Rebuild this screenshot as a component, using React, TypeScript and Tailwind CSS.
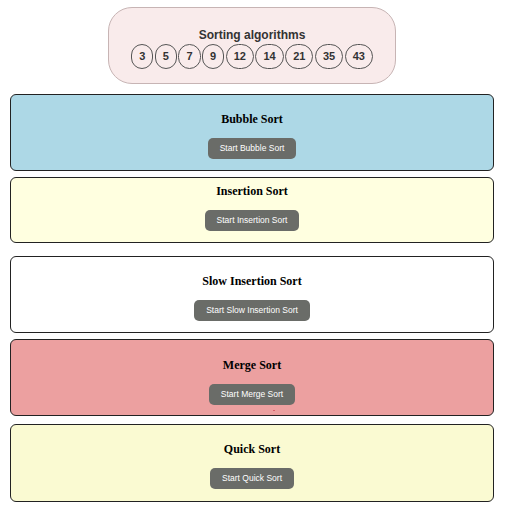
const numbers = [3, 5, 7, 9, 12, 14, 21, 35, 43];

type Algo = {
  name: string;
  bg: string;
  // spacing differs per card in the original page
  wrap: string;
};

const algos: Algo[] = [
  { name: "Bubble Sort", bg: "bg-[#add8e6]", wrap: "mt-[10px] h-[77px] pt-[16px]" },
  { name: "Insertion Sort", bg: "bg-[#ffffe0]", wrap: "mt-[6px] h-[66px] pt-[5px]" },
  { name: "Slow Insertion Sort", bg: "bg-white", wrap: "mt-[13px] h-[77px] pt-[16px]" },
  { name: "Merge Sort", bg: "bg-[#eca0a0]", wrap: "mt-[6px] h-[77px] pt-[17px]" },
  { name: "Quick Sort", bg: "bg-[#fafad2]", wrap: "mt-[8px] h-[78px] pt-[16px]" },
];

function Header() {
  return (
    <div className="mx-auto mt-[7px] flex w-fit flex-col items-center rounded-[24px] border border-[#c7b4b4] bg-[#f9ebeb] px-[22px] pt-[19px] pb-[14px]">
      <h1 className="font-['Liberation_Sans',Arial,sans-serif] text-[12px] leading-[16px] font-bold text-[#333]">
        Sorting algorithms
      </h1>
      <div className="mt-[1px] flex gap-[1.5px]">
        {numbers.map((n) => (
          <span
            key={n}
            className="flex h-[25px] items-center justify-center rounded-full border border-[#555] px-[7px] font-['Liberation_Sans',Arial,sans-serif] text-[11px] font-bold text-[#333]"
          >
            {n}
          </span>
        ))}
      </div>
    </div>
  );
}

function AlgoCard({ algo }: { algo: Algo }) {
  return (
    <section
      className={`relative ml-[10px] box-border flex w-[484px] flex-col items-center rounded-[6px] border border-[#222] ${algo.bg} ${algo.wrap}`}
    >
      <h2 className="font-['Liberation_Serif','Times_New_Roman',serif] text-[12px] leading-[16px] font-bold text-black">
        {algo.name}
      </h2>
      <button className="mt-[11px] h-[21px] rounded-[5px] bg-[#6a6c68] px-[12px] font-['Liberation_Sans',Arial,sans-serif] text-[8.5px] text-white">
        Start {algo.name}
      </button>
      {algo.name === "Merge Sort" && (
        <span className="absolute top-[70px] left-[262px] h-[1px] w-[2px] bg-[#d8606a]" />
      )}
    </section>
  );
}

export default function App() {
  return (
    <div className="w-[504px] bg-white pb-[12px]">
      <Header />
      {algos.map((algo) => (
        <AlgoCard key={algo.name} algo={algo} />
      ))}
    </div>
  );
}
